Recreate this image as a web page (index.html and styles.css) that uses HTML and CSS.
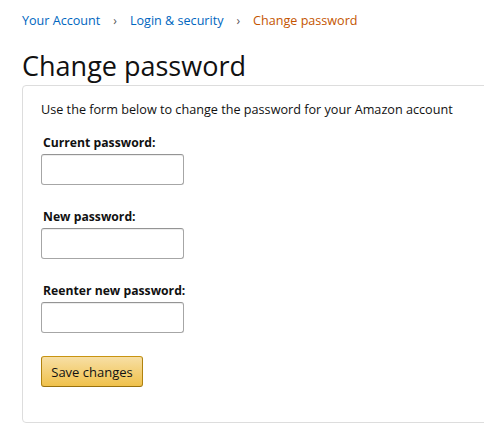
FILE: index.html
```html
<!DOCTYPE html>
<html>
<head>
<meta charset="utf-8">
<link rel="stylesheet" href="styles.css">
</head>
<body>
<nav class="crumbs">
  <a class="crumb" href="#">Your Account</a>
  <span class="sep">›</span>
  <a class="crumb" href="#">Login &amp; security</a>
  <span class="sep">›</span>
  <span class="crumb current">Change password</span>
</nav>
<h1 class="title">Change password</h1>
<div class="box">
  <p class="intro">Use the form below to change the password for your Amazon account</p>
  <form class="form">
    <div class="field">
      <label class="label">Current password:</label>
      <input class="input" type="password">
    </div>
    <div class="field">
      <label class="label">New password:</label>
      <input class="input" type="password">
    </div>
    <div class="field">
      <label class="label">Reenter new password:</label>
      <input class="input" type="password">
    </div>
    <button class="btn" type="button">Save changes</button>
  </form>
</div>
</body>
</html>
```
FILE: styles.css
```css
html { overflow: hidden; }
body {
  margin: 0;
  padding: 0 0 0 22px;
  font-family: "Open Sans", Arial, sans-serif;
  color: #111;
  background: #fff;
}
.crumbs {
  display: flex;
  align-items: center;
  gap: 13px;
  height: 20px;
  padding-top: 10px;
  font-size: 12.6px;
}
.crumb { color: #0066c0; text-decoration: none; }
.crumb.current { color: #c45500; }
.sep { color: #555; font-size: 12px; }
.title {
  margin: 17px 0 0 0;
  font-size: 27px;
  font-weight: 400;
  line-height: 38px;
  height: 38px;
}
.box {
  width: 480px;
  height: 338px;
  box-sizing: border-box;
  border: 1px solid #ddd;
  border-radius: 4px;
  padding: 14px 18px;
}
.intro { margin: 0; font-size: 12.65px; line-height: 18px; }
.form { display: flex; flex-direction: column; align-items: flex-start; margin-top: 16px; }
.field { display: flex; flex-direction: column; margin-bottom: 23px; }
.label { font-size: 12.2px; font-weight: 700; padding-left: 2px; line-height: 18px; margin-bottom: 2px; }
.input {
  width: 143px;
  height: 31px;
  box-sizing: border-box;
  border: 1px solid #a6a6a6;
  border-top-color: #949494;
  border-radius: 3px;
  margin: 0;
  box-shadow: 0 1px 0 rgba(255,255,255,.5), 0 1px 0 rgba(0,0,0,.07) inset;
}
.btn {
  margin-top: 0;
  width: 102px;
  height: 31px;
  border: 1px solid #a88734;
  border-color: #c89411 #b0820f #99710d;
  border-radius: 3px;
  background: linear-gradient(to bottom, #f7dfa5, #f0c14b);
  font-family: "Open Sans", Arial, sans-serif;
  font-size: 13px;
  color: #111;
  padding: 0;
}
```
